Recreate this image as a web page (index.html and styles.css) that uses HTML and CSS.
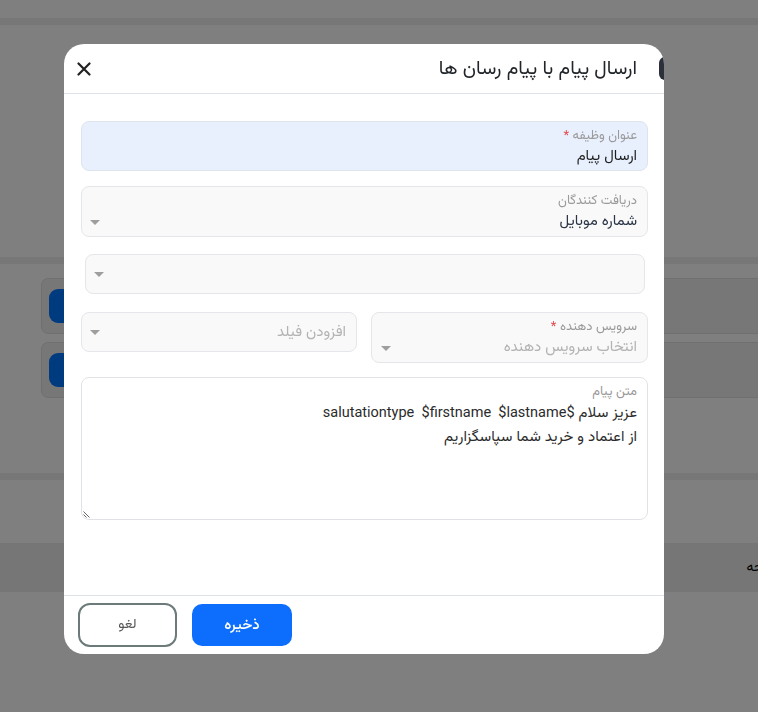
FILE: index.html
```html
<!DOCTYPE html>
<html lang="fa" dir="rtl">
<head>
<meta charset="utf-8">
<title>ارسال پیام با پیام رسان ها</title>
<link rel="stylesheet" href="styles.css">
</head>
<body>
<div class="page">
  <div class="gap-top"></div>
  <div class="band"></div>
  <div class="hero"></div>
  <div class="band"></div>
  <div class="list">
    <div class="card"><span class="add-btn"></span></div>
    <div class="card"><span class="add-btn"></span></div>
  </div>
  <div class="band band-low"></div>
  <div class="tab-bar"><span class="tab-text">صفحه</span></div>
</div>

<div class="backdrop"></div>

<div class="modal">
  <span class="edge-tab"></span>
  <div class="modal-header">
    <h5 class="modal-title">ارسال پیام با پیام رسان ها</h5>
    <button class="close-btn" aria-label="بستن">
      <svg width="14" height="14" viewBox="0 0 14 14"><path d="M1.5 1.5 L12.5 12.5 M12.5 1.5 L1.5 12.5" stroke="#222" stroke-width="2.2" stroke-linecap="round" fill="none"/></svg>
    </button>
  </div>
  <div class="modal-body">
    <div class="field field-filled">
      <div class="label">عنوان وظیفه <span class="req">*</span></div>
      <div class="value-row"><span class="value">ارسال پیام</span></div>
    </div>
    <div class="field field-select">
      <div class="label">دریافت کنندگان</div>
      <div class="value-row"><span class="value value-blue">شماره موبایل</span><span class="caret"></span></div>
    </div>
    <div class="field field-compact field-inset">
      <span class="placeholder"></span><span class="caret"></span>
    </div>
    <div class="row">
      <div class="field field-select field-half field-wide-caret">
        <div class="label">سرویس دهنده <span class="req">*</span></div>
        <div class="value-row"><span class="placeholder">انتخاب سرویس دهنده</span><span class="caret"></span></div>
      </div>
      <div class="field field-compact field-half">
        <span class="placeholder">افزودن فیلد</span><span class="caret"></span>
      </div>
    </div>
    <div class="text-box">
      <div class="label">متن پیام</div>
      <div class="message"><div class="msg-line">عزیز سلام <bdi dir="ltr">salutationtype  $firstname  $lastname$</bdi></div><div class="msg-line">از اعتماد و خرید شما سپاسگزاریم</div></div>
      <svg class="grip" width="8" height="8" viewBox="0 0 8 8"><path d="M0.5 1.5 L6.5 7.5 M0.5 4.5 L3.5 7.5" stroke="#555" stroke-width="0.9" fill="none"/></svg>
    </div>
  </div>
  <div class="modal-footer">
    <button class="btn btn-primary">ذخیره</button>
    <button class="btn btn-outline">لغو</button>
  </div>
</div>
</body>
</html>
```

FILE: styles.css
```css
* { box-sizing: border-box; }
html, body { margin: 0; padding: 0; }
body {
  width: 758px;
  height: 712px;
  overflow: hidden;
  background: #ffffff;
  font-family: "Vazirmatn", Roboto, "Noto Sans Arabic", "DejaVu Sans", sans-serif;
  color: #212529;
}

/* ---------- background page ---------- */
.page { width: 758px; }
.gap-top { height: 18px; }
.band { height: 7px; background: #eeeeee; }
.hero { height: 232px; }
.list {
  padding: 14px 0 0 0;
  display: flex;
  flex-direction: column;
  gap: 8px;
  height: 209px;
}
.card {
  height: 56px;
  margin-left: 41px;
  margin-right: -10px;
  background: #eeeeee;
  border: 1px solid #e0e0e0;
  border-radius: 7px;
  display: flex;
  align-items: center;
  justify-content: flex-end;
  padding-left: 7px;
}
.add-btn {
  width: 34px;
  height: 34px;
  border-radius: 9px;
  background: #0074ff;
}
.band-low { margin-bottom: 63px; }
.tab-bar {
  height: 49px;
  background: #ededed;
  display: flex;
  align-items: center;
  overflow: hidden;
}
.tab-text {
  margin-right: -24px;
  font-size: 14px;
  color: #000;
}

/* ---------- backdrop ---------- */
.backdrop {
  position: fixed;
  inset: 0;
  background: rgba(0, 0, 0, 0.5);
}

/* ---------- modal ---------- */
.modal {
  position: fixed;
  left: 64px;
  top: 44px;
  width: 600px;
  height: 610px;
  background: #ffffff;
  border-radius: 20px;
  overflow: hidden;
  display: flex;
  flex-direction: column;
}
.edge-tab {
  position: absolute;
  top: 13px;
  right: -16px;
  width: 21px;
  height: 23px;
  border-radius: 6px;
  background: #2c303b;
}
.modal-header {
  height: 50px;
  flex: none;
  border-bottom: 1px solid #dee2e6;
  display: flex;
  align-items: center;
  justify-content: space-between;
  padding: 0 27px 0 13px;
}
.modal-title {
  margin: 0;
  font-size: 19.5px;
  font-weight: 400;
  color: #212529;
}
.close-btn {
  border: 0;
  background: transparent;
  padding: 0;
  width: 14px;
  height: 14px;
  display: flex;
}

.modal-body {
  flex: 1;
  padding: 27px 16px 0 17px;
  display: flex;
  flex-direction: column;
}

.field {
  border: 1px solid #e4e6ea;
  border-radius: 8px;
  background: #f9f9f9;
  padding: 6px 10px 0 8px;
}
.field-filled {
  height: 50px;
  background: #e8f0fe;
  border-color: #dde4ee;
  margin-bottom: 15px;
}
.field-select {
  height: 51px;
  margin-bottom: 17px;
}
.field-compact {
  height: 40px;
  padding: 0 10px 0 8px;
  display: flex;
  align-items: center;
  justify-content: space-between;
}
.field-inset {
  margin: 0 3px 18px 4px;
}
.field-wide-caret { padding-left: 9px; }
.label {
  font-size: 13px;
  line-height: 17px;
  color: #9a9a9a;
}
.req { color: #e5484d; }
.value-row {
  display: flex;
  align-items: center;
  justify-content: space-between;
  line-height: 22px;
  height: 22px;
  margin-top: 1px;
}
.value {
  font-size: 15px;
  color: #1e1e1e;
}
.value-blue { color: #2a3547; }
.placeholder {
  font-size: 15px;
  color: #b3b3b3;
}
.caret {
  width: 0;
  height: 0;
  border-left: 5px solid transparent;
  border-right: 5px solid transparent;
  border-top: 5px solid #9e9e9e;
}

.row {
  display: flex;
  gap: 14px;
  align-items: flex-start;
  margin-bottom: 14px;
}
.field-half { flex: 1; margin: 0; }
.row .field-select { flex: 0 0 277px; }

.text-box {
  position: relative;
  height: 143px;
  border: 1px solid #e0e2e5;
  border-radius: 8px;
  background: #ffffff;
  display: flex;
  flex-direction: column;
  padding: 6px 10px 0 10px;
}
.message {
  flex: 1;
  font-size: 15px;
  line-height: 24px;
  color: #2b2b2b;
  white-space: pre-wrap;
}
.message bdi {
  font-family: Roboto, sans-serif;
  font-size: 14.5px;
}
.grip {
  position: absolute;
  left: 1px;
  bottom: 1px;
}

.modal-footer {
  height: 59px;
  flex: none;
  border-top: 1px solid #dee2e6;
  display: flex;
  align-items: center;
  justify-content: flex-end;
  gap: 15px;
  padding: 0 15px 0 14px;
}
.btn {
  font-family: inherit;
  font-size: 14px;
  cursor: pointer;
}
.btn-primary {
  width: 100px;
  height: 42px;
  border: 0;
  border-radius: 10px;
  background: #0d6efd;
  color: #ffffff;
  font-size: 15px;
  font-weight: 500;
}
.btn-outline {
  width: 99px;
  height: 44px;
  border: 2px solid #6c7a7a;
  border-radius: 12px;
  background: #ffffff;
  color: #555555;
}
```
